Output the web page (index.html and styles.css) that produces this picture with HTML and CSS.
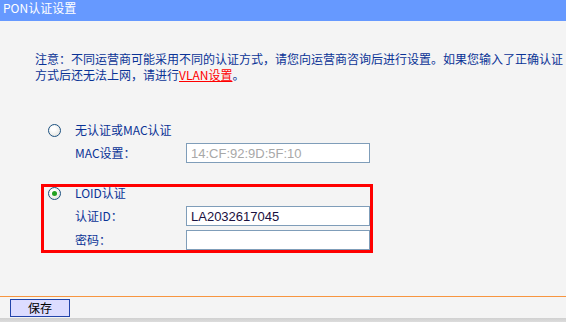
FILE: index.html
```html
<!DOCTYPE html>
<html lang="zh-CN">
<head>
<meta charset="utf-8">
<title>PON认证设置</title>
<link rel="stylesheet" href="styles.css">
</head>
<body>
<div class="page">
  <div class="header">PON认证设置</div>
  <div class="main">
    <p class="note"><span>注意：不同运营商可能采用不同的认证方式，请您向运营商咨询后进行设置。如果您输入了正确认证</span><span>方式后还无法上网，请进行</span><a class="link" href="#">VLAN设置</a><span>。</span></p>
    <div class="group">
      <div class="row row-head">
        <span class="cell-radio"><input type="radio" class="radio" name="auth"></span>
        <span class="label">无认证或MAC认证</span>
      </div>
      <div class="row row-field">
        <span class="cell-radio"></span>
        <span class="label">MAC设置：</span>
        <input type="text" class="field" value="14:CF:92:9D:5F:10" disabled>
      </div>
    </div>
    <div class="group group-active">
      <div class="row row-head">
        <span class="cell-radio"><input type="radio" class="radio" name="auth" checked></span>
        <span class="label">LOID认证</span>
      </div>
      <div class="row row-field">
        <span class="cell-radio"></span>
        <span class="label">认证ID：</span>
        <input type="text" class="field field-value" value="LA2032617045">
      </div>
      <div class="row row-field row-next">
        <span class="cell-radio"></span>
        <span class="label">密码：</span>
        <input type="password" class="field" value="">
      </div>
    </div>
  </div>
  <div class="footer">
    <button class="btn" type="button">保存</button>
  </div>
  <div class="bottom-strip"></div>
</div>
</body>
</html>
```

FILE: styles.css
```css
html, body {
  margin: 0;
  padding: 0;
  height: 100%;
  overflow: hidden;
}

body {
  background: #f4f4f4;
  font-family: "Noto Sans CJK SC", "Liberation Sans", sans-serif;
  font-size: 12px;
  color: #0a3396;
}

.page {
  display: flex;
  flex-direction: column;
  height: 322px;
}

.header {
  height: 21px;
  box-sizing: border-box;
  background: #6699ff;
  color: #ffffff;
  padding: 0 0 0 3px;
  line-height: 15px;
}

.main {
  flex: 1;
  padding-top: 30px;
}

.note {
  margin: 0;
  padding: 0 0 0 35px;
  line-height: 16px;
  color: #0a3396;
}

.link {
  color: #ff0000;
  text-decoration: underline;
}

.group {
  margin: 38px 0 0 41px;
  width: 332px;
  box-sizing: border-box;
  border: 3px solid transparent;
  padding-left: 3px;
}

.group-active {
  margin-top: 18px;
  border-color: #ff0000;
}

.row {
  display: flex;
  align-items: center;
}

.row-head {
  height: 12px;
}

.row-field {
  height: 20px;
  margin-top: 7px;
}

.row-next {
  margin-top: 4px;
}

.cell-radio {
  width: 28px;
  flex: none;
  display: flex;
  align-items: center;
}

.label {
  width: 111px;
  flex: none;
  color: #0a3396;
  line-height: 12px;
  white-space: nowrap;
}

.radio {
  appearance: none;
  -webkit-appearance: none;
  margin: 0 0 0 1px;
  width: 13px;
  height: 13px;
  box-sizing: border-box;
  border: 1px solid #1c5180;
  border-radius: 50%;
  background: radial-gradient(circle at 40% 35%, #ffffff 20%, #dcdcd6 100%);
  position: relative;
}

.radio:checked::after {
  content: "";
  position: absolute;
  left: 3px;
  top: 3px;
  width: 5px;
  height: 5px;
  border-radius: 50%;
  background: #21a121;
}

.field {
  width: 184px;
  height: 20px;
  flex: none;
  box-sizing: border-box;
  margin: 0;
  border: 1px solid #7f9db9;
  background: #ffffff;
  padding: 0 0 0 4px;
  font-family: "Liberation Sans", Arial, sans-serif;
  font-size: 13px;
  color: #1a1040;
  outline: none;
}

.field:disabled {
  color: #a8a8a8;
  background: #ffffff;
}

.footer {
  height: 22px;
  border-top: 1px solid #f7953f;
  box-sizing: border-box;
  padding: 2px 0 0 10px;
}

.btn {
  width: 60px;
  height: 18px;
  margin: 0;
  padding: 0;
  box-sizing: border-box;
  border: 1px solid #2244aa;
  background: #dcdcff;
  color: #000000;
  font-family: "Noto Sans CJK SC", sans-serif;
  font-size: 12px;
  line-height: 16px;
  display: block;
}

.bottom-strip {
  height: 4px;
  background: linear-gradient(to bottom, #d0d0d0, #dcdcdc);
}
```
